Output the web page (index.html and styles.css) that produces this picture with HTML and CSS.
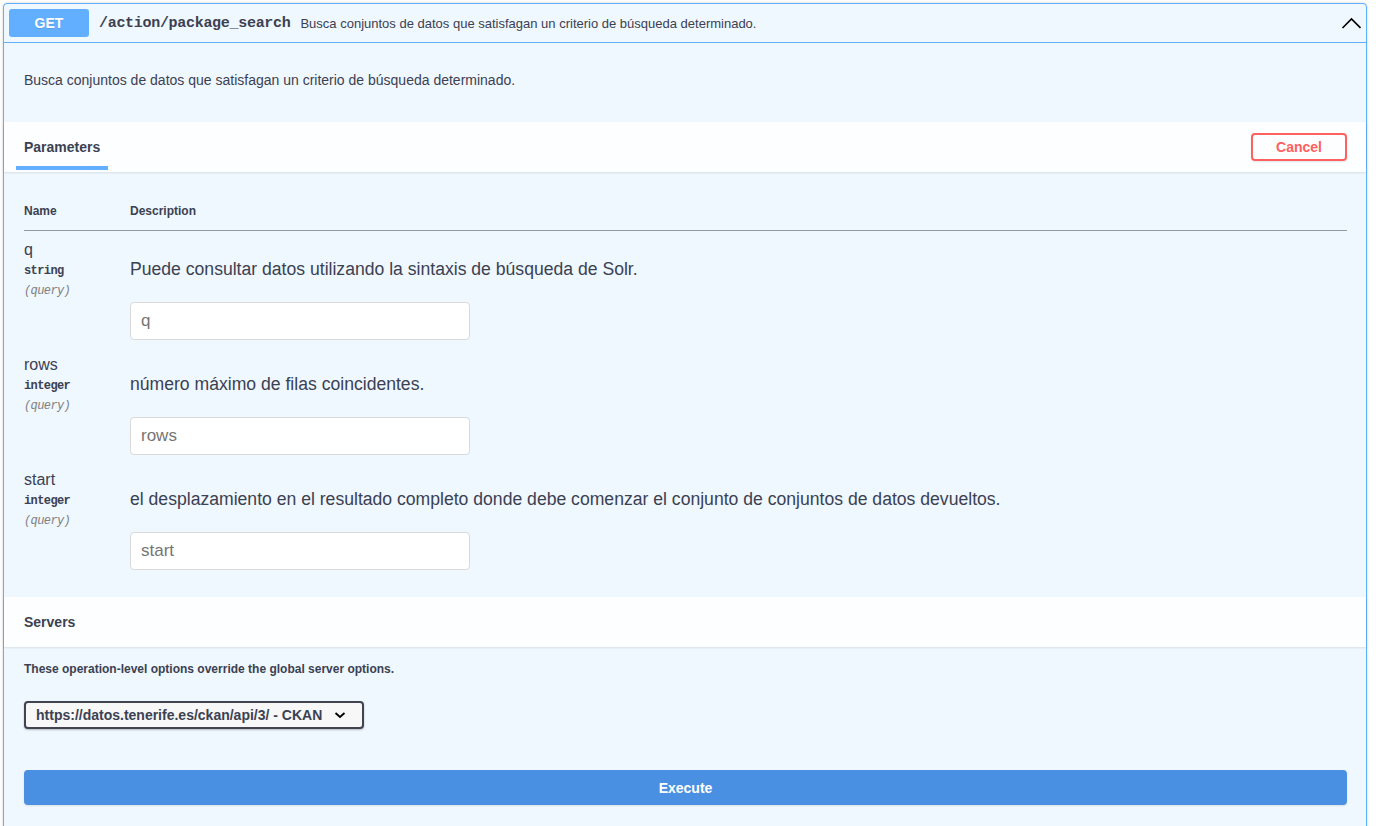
FILE: index.html
```html
<!DOCTYPE html>
<html lang="es">
<head>
<meta charset="utf-8">
<title>package_search</title>
<link rel="stylesheet" href="styles.css">
</head>
<body>
<div class="page">
  <div class="opblock">
    <div class="summary">
      <span class="method">GET</span>
      <span class="path">/action/package_search</span>
      <span class="summary-desc">Busca conjuntos de datos que satisfagan un criterio de búsqueda determinado.</span>
      <svg class="arrow" width="20" height="20" viewBox="0 0 20 20"><polyline points="1.5,15 10.5,6 19.5,15" fill="none" stroke="#000" stroke-width="1.6"/></svg>
    </div>
    <div class="desc-wrapper">
      <p>Busca conjuntos de datos que satisfagan un criterio de búsqueda determinado.</p>
    </div>
    <div class="section-header">
      <h4 class="tab">Parameters</h4>
      <button class="btn-cancel">Cancel</button>
    </div>
    <div class="table-container">
      <table class="params">
        <thead>
          <tr><th class="col-name">Name</th><th>Description</th></tr>
        </thead>
        <tbody>
          <tr>
            <td class="col-name">
              <div class="pname">q</div>
              <div class="ptype">string</div>
              <div class="pin">(query)</div>
            </td>
            <td class="col-desc">
              <p>Puede consultar datos utilizando la sintaxis de búsqueda de Solr.</p>
              <input type="text" placeholder="q">
            </td>
          </tr>
          <tr>
            <td class="col-name">
              <div class="pname">rows</div>
              <div class="ptype">integer</div>
              <div class="pin">(query)</div>
            </td>
            <td class="col-desc">
              <p>número máximo de filas coincidentes.</p>
              <input type="text" placeholder="rows">
            </td>
          </tr>
          <tr>
            <td class="col-name">
              <div class="pname">start</div>
              <div class="ptype">integer</div>
              <div class="pin">(query)</div>
            </td>
            <td class="col-desc">
              <p>el desplazamiento en el resultado completo donde debe comenzar el conjunto de conjuntos de datos devueltos.</p>
              <input type="text" placeholder="start">
            </td>
          </tr>
        </tbody>
      </table>
    </div>
    <div class="section-header">
      <h4 class="plain">Servers</h4>
    </div>
    <div class="servers-wrapper">
      <h4 class="message">These operation-level options override the global server options.</h4>
      <div class="select">
        <span>https://datos.tenerife.es/ckan/api/3/ - CKAN</span>
        <svg width="12" height="8" viewBox="0 0 12 8"><polyline points="1.5,2 6,6 10.5,2" fill="none" stroke="#000" stroke-width="1.8"/></svg>
      </div>
    </div>
    <div class="execute-wrapper">
      <button class="btn-execute">Execute</button>
    </div>
  </div>
</div>
</body>
</html>
```
FILE: styles.css
```css
* { box-sizing: border-box; }
body {
  margin: 0;
  background: #fff;
  font-family: "Liberation Sans", Arial, sans-serif;
  color: #3b4151;
}
.page {
  padding: 3px 9px 0 3px;
}
.opblock {
  border: 1px solid #61affe;
  border-radius: 4px;
  background: #eff7ff;
  box-shadow: 0 0 3px rgba(0,0,0,.19);
  padding-bottom: 30px;
}
.summary {
  display: flex;
  align-items: center;
  padding: 5px;
  border-bottom: 1px solid #61affe;
}
.method {
  width: 80px;
  height: 28px;
  line-height: 28px;
  text-align: center;
  background: #61affe;
  color: #fff;
  font-size: 14px;
  font-weight: 700;
  border-radius: 3px;
  text-shadow: 0 1px 0 rgba(0,0,0,.1);
}
.path {
  font-family: "Liberation Mono", "DejaVu Sans Mono", monospace;
  font-size: 15px;
  letter-spacing: -0.3px;
  font-weight: 700;
  padding: 0 10px;
  color: #3b4151;
}
.summary-desc {
  flex: 1;
  font-size: 13px;
  color: #3b4151;
}
.arrow { display: block; }
.desc-wrapper {
  padding: 15px 20px;
  margin-bottom: 5px;
}
.desc-wrapper p {
  margin: 14px 0 13px;
  font-size: 14px;
  line-height: 17px;
}
.section-header {
  display: flex;
  align-items: center;
  justify-content: space-between;
  min-height: 50px;
  padding: 8px 19px 8px 20px;
  background: rgba(255,255,255,.8);
  box-shadow: 0 1px 2px rgba(0,0,0,.1);
}
.section-header h4 {
  margin: 0;
  font-size: 14px;
  line-height: 16px;
  font-weight: 700;
}
.tab { position: relative; }
.tab::after {
  content: "";
  position: absolute;
  left: -10%;
  width: 120%;
  bottom: -15px;
  height: 4px;
  background: #61affe;
}
.btn-cancel {
  font-family: "Liberation Sans", Arial, sans-serif;
  font-size: 14px;
  line-height: 16px;
  font-weight: 700;
  color: #ff6060;
  background: transparent;
  border: 2px solid #ff6060;
  border-radius: 4px;
  padding: 4px 23px;
  box-shadow: 0 1px 2px rgba(0,0,0,.1);
}
.table-container {
  padding: 20px 19px 21px 20px;
}
.params {
  width: 100%;
  border-collapse: collapse;
}
.params th {
  text-align: left;
  font-size: 12px;
  line-height: 14px;
  font-weight: 700;
  padding: 12px 0;
  border-bottom: 1px solid rgba(59,65,81,.3);
}
.params .col-name { width: 106px; }
.params td {
  vertical-align: top;
  padding: 10px 0 6px;
}
.pname {
  font-size: 16px;
  line-height: 18px;
}
.ptype {
  font-family: "Liberation Mono", "DejaVu Sans Mono", monospace;
  font-size: 12px;
  letter-spacing: -0.6px;
  font-weight: 700;
  line-height: 14px;
  padding: 5px 0;
}
.pin {
  font-family: "Liberation Mono", "DejaVu Sans Mono", monospace;
  font-size: 12px;
  letter-spacing: -0.6px;
  line-height: 14px;
  font-style: italic;
  color: #808080;
  padding-top: 1px;
}
.col-desc p {
  margin: 18px 0 23px;
  font-size: 17.6px;
  line-height: 20px;
}
.col-desc input {
  display: block;
  margin: 0;
  width: 340px;
  height: 38px;
  padding: 8px 10px;
  border: 1px solid #d9d9d9;
  border-radius: 4px;
  background: #fff;
  font-family: "Liberation Sans", Arial, sans-serif;
  font-size: 17px;
  color: #3b4151;
  outline: none;
}
.col-desc input::placeholder { color: #757575; }
.servers-wrapper {
  padding: 15px 20px 0;
}
.message {
  margin: 0;
  font-size: 12px;
  line-height: 14px;
  font-weight: 700;
}
.select {
  margin-top: 25px;
  width: 340px;
  height: 28px;
  display: flex;
  align-items: center;
  justify-content: space-between;
  padding: 0 16px 0 10px;
  background: #f7f7f7;
  border: 2px solid #41444e;
  border-radius: 4px;
  box-shadow: 0 1px 2px rgba(0,0,0,.25);
  font-size: 14px;
  font-weight: 700;
  color: #3b4151;
}
.select svg { display: block; }
.execute-wrapper {
  padding: 41px 19px 0 20px;
}
.btn-execute {
  display: block;
  width: 100%;
  height: 35px;
  background: #4990e2;
  border: 2px solid #4990e2;
  border-radius: 4px;
  color: #fff;
  font-family: "Liberation Sans", Arial, sans-serif;
  font-size: 14px;
  font-weight: 700;
  box-shadow: 0 1px 2px rgba(0,0,0,.1);
}
```
